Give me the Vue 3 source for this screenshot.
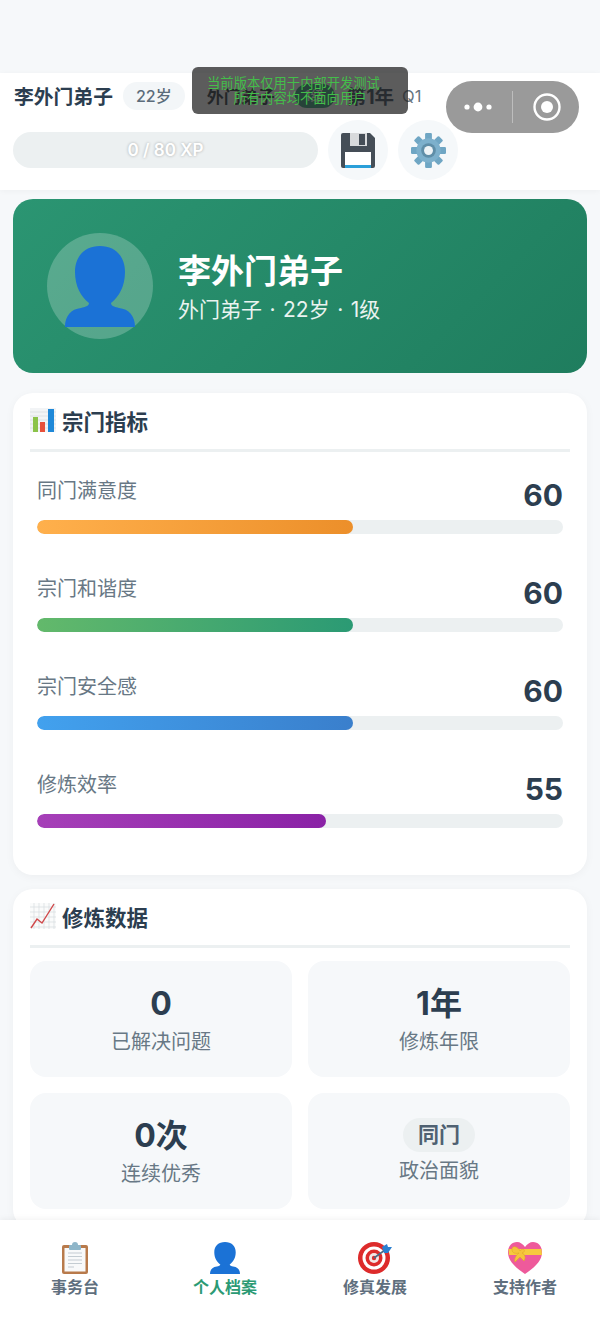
<template>
  <div class="page">
    <div class="status-space"></div>

    <header class="top">
      <div class="top-row">
        <span class="top-name">李外门弟子</span>
        <span class="age-pill">22岁</span>
        <span class="rank-text">外门弟子</span>
        <span class="rank-blob">1级</span>
        <span class="year">第1年</span>
        <span class="quarter">Q1</span>
      </div>
      <div class="top-row second">
        <div class="xp-bar">0 / 80 XP</div>
        <button class="round-btn">
          <svg width="34" height="35" viewBox="0 0 34 35">
            <path d="M2 0h27l5 5v28a2 2 0 0 1-2 2H2a2 2 0 0 1-2-2V2a2 2 0 0 1 2-2z" fill="#454e57" />
            <rect x="9" y="0" width="17" height="13" fill="#d8dadc" />
            <rect x="18" y="1" width="6" height="11" fill="#454e57" />
            <rect x="4" y="19" width="26" height="16" fill="#fff" />
            <rect x="4" y="32" width="26" height="3" fill="#2b9fd9" />
          </svg>
        </button>
        <button class="round-btn">
          <svg width="35" height="35" viewBox="0 0 36 36">
            <g fill="#6fa6c4">
              <rect x="14.5" y="0" width="7" height="36" rx="1.2" />
              <rect x="14.5" y="0" width="7" height="36" rx="1.2" transform="rotate(45 18 18)" />
              <rect x="14.5" y="0" width="7" height="36" rx="1.2" transform="rotate(90 18 18)" />
              <rect x="14.5" y="0" width="7" height="36" rx="1.2" transform="rotate(135 18 18)" />
            </g>
            <circle cx="18" cy="18" r="12.5" fill="#7db0cc" />
            <circle cx="18" cy="18" r="7.5" fill="#5f8ea8" />
            <circle cx="18" cy="18" r="4.6" fill="#eef3f6" />
          </svg>
        </button>
      </div>
    </header>

    <main class="content">
      <section class="hero">
        <div class="avatar">
          <svg width="70" height="81" viewBox="0 0 70 81">
            <path fill="#1b72d6" d="M35 0C50 0 60 10 60 26C60 40 54 51 46 57C46 60 50 61 54 62C64 63 70 70 70 81H0C0 70 6 63 16 62C20 61 24 60 24 57C16 51 10 40 10 26C10 10 20 0 35 0z" />
          </svg>
        </div>
        <div>
          <div class="hero-name">李外门弟子</div>
          <div class="hero-sub">外门弟子 · 22岁 · 1级</div>
        </div>
      </section>

      <section class="card metrics">
        <h2 class="card-title">
          <svg width="26" height="24" viewBox="0 0 26 24">
            <rect width="26" height="24" fill="#f2f4f6" />
            <path d="M0 4h26M0 8h26M0 12h26M0 16h26M0 20h26" stroke="#d9dee2" stroke-width="0.8" />
            <rect x="3" y="9" width="5" height="15" fill="#8bc34a" />
            <rect x="10" y="14" width="5" height="10" fill="#e8503a" />
            <rect x="18" y="1" width="6" height="23" fill="#1e88d8" />
          </svg>
          宗门指标
        </h2>
        <div v-for="m in metrics" :key="m.label" class="metric">
          <div class="metric-head">
            <span class="metric-label">{{ m.label }}</span>
            <span class="metric-value">{{ m.value }}</span>
          </div>
          <div class="track">
            <div class="fill" :style="{ width: m.value + '%', background: m.color }"></div>
          </div>
        </div>
      </section>

      <section class="card">
        <h2 class="card-title">
          <svg width="26" height="26" viewBox="0 0 26 26">
            <rect width="26" height="26" fill="#fafbfb" />
            <path d="M0 4h26M0 9h26M0 14h26M0 19h26M0 24h26M4 0v26M9 0v26M14 0v26M19 0v26M24 0v26" stroke="#d6dcdf" stroke-width="0.7" />
            <path d="M1 25L7 16l5 4L24 1" fill="none" stroke="#d0484a" stroke-width="1.4" />
          </svg>
          修炼数据
        </h2>
        <div class="stats">
          <div v-for="s in stats" :key="s.label" class="stat">
            <span v-if="s.pill" class="stat-pill">{{ s.value }}</span>
            <span v-else class="stat-value">{{ s.value }}</span>
            <span class="stat-label">{{ s.label }}</span>
          </div>
        </div>
      </section>
    </main>

    <nav class="tabbar">
      <div class="tab">
        <svg width="28" height="32" viewBox="0 0 28 32">
          <rect x="1" y="3" width="26" height="29" rx="2" fill="#b87a4b" />
          <rect x="3.5" y="6" width="21" height="23.5" fill="#f8f9fa" />
          <path d="M7 11h14M7 14.5h14M7 18h14M7 21.5h14M7 25h6" stroke="#c4ccd2" stroke-width="1.1" />
          <rect x="8" y="3" width="12" height="5" rx="1" fill="#8fb6c9" />
          <circle cx="14" cy="3" r="3" fill="#8fb6c9" />
        </svg>
        <span>事务台</span>
      </div>
      <div class="tab active">
        <svg width="30" height="32" viewBox="0 0 70 81" preserveAspectRatio="none">
          <path fill="#1b72d6" d="M35 0C50 0 60 10 60 26C60 40 54 51 46 57C46 60 50 61 54 62C64 63 70 70 70 81H0C0 70 6 63 16 62C20 61 24 60 24 57C16 51 10 40 10 26C10 10 20 0 35 0z" />
        </svg>
        <span>个人档案</span>
      </div>
      <div class="tab">
        <svg width="34" height="32" viewBox="0 0 34 32">
          <circle cx="16" cy="16" r="16" fill="#dd2b2b" />
          <circle cx="16" cy="16" r="11.5" fill="#fff" />
          <circle cx="16" cy="16" r="8.5" fill="#dd2b2b" />
          <circle cx="16" cy="16" r="5" fill="#f3e6e4" />
          <circle cx="16" cy="16" r="2.2" fill="#dd2b2b" />
          <path d="M16 16L27 8" stroke="#4a6a85" stroke-width="1.6" />
          <path d="M24 5l5-3 1 3 4 0-4 6-4 0z" fill="#2a7fd0" />
        </svg>
        <span>修真发展</span>
      </div>
      <div class="tab">
        <svg width="34" height="32" viewBox="0 0 34 32">
          <path fill="#ee5a9b" d="M17 32C7 25 0 19 0 10 0 4 4 0 9 0c3 0 6 2 8 5 2-3 5-5 8-5 5 0 9 4 9 10 0 9-7 15-17 22z" />
          <path fill="#f7c93e" d="M.5 7h33l.5 6H1z" />
          <path fill="#f5c23a" stroke="#e0a52a" stroke-width="0.6" d="M12 9C9 3 3 4 4 8c0 3 4 4 7 3-3 2-5 6-4 9l5-5 4 4c2-3 1-7-2-8 3-1 3-3 1-4-1 0-2 1-3 2z" />
        </svg>
        <span>支持作者</span>
      </div>
    </nav>

    <div class="dev-toast">
      <p>当前版本仅用于内部开发测试</p>
      <p>所有内容均不面向用户</p>
    </div>

    <div class="capsule">
      <svg width="30" height="12" viewBox="0 0 30 12">
        <circle cx="4" cy="6" r="2.6" fill="#fff" />
        <circle cx="15" cy="6" r="4.4" fill="#fff" />
        <circle cx="26" cy="6" r="2.6" fill="#fff" />
      </svg>
      <span class="capsule-line"></span>
      <svg width="30" height="30" viewBox="0 0 30 30">
        <circle cx="15" cy="15" r="12.5" fill="none" stroke="#fff" stroke-width="2.4" />
        <circle cx="15" cy="15" r="6" fill="#fff" />
      </svg>
    </div>
  </div>
</template>

<script setup>
const metrics = [
  { label: '同门满意度', value: 60, color: 'linear-gradient(90deg, #ffb04c, #ec8f2a)' },
  { label: '宗门和谐度', value: 60, color: 'linear-gradient(90deg, #63b96b, #2b9a74)' },
  { label: '宗门安全感', value: 60, color: 'linear-gradient(90deg, #42a1ee, #3a7fcc)' },
  { label: '修炼效率', value: 55, color: 'linear-gradient(90deg, #a63fb8, #8a22a6)' }
]

const stats = [
  { value: '0', label: '已解决问题' },
  { value: '1年', label: '修炼年限' },
  { value: '0次', label: '连续优秀' },
  { value: '同门', label: '政治面貌', pill: true }
]
</script>

<style scoped>
.page {
  position: relative;
  width: 600px;
  height: 1320px;
  overflow: hidden;
  background: #f6f8fa;
  font-family: Inter, "Noto Sans CJK SC", sans-serif;
  color: #2c3e50;
}

.status-space {
  height: 73px;
}

.top {
  height: 117px;
  padding: 0 13px;
  background: #fff;
  box-sizing: border-box;
  box-shadow: 0 1px 6px rgba(0, 0, 0, 0.04);
}

.top-row {
  display: flex;
  align-items: center;
  height: 45px;
}

.top-row.second {
  height: 60px;
  margin-top: 2px;
  gap: 10px;
}

.top-name {
  margin-left: 1px;
  font-size: 19.8px;
  font-weight: 700;
}

.age-pill {
  margin-left: 10px;
  padding: 0 13px;
  height: 28px;
  line-height: 28px;
  border-radius: 14px;
  background: #f3f6f8;
  font-size: 16px;
  font-weight: 500;
  color: #5c6c7b;
}

.rank-text {
  margin-left: 22px;
  font-size: 17px;
  font-weight: 600;
  color: #1e2b33;
}

.rank-blob {
  width: 40px;
  height: 24px;
  margin-left: 20px;
  border-radius: 12px;
  background: #2b9a74;
  color: #fff;
  font-size: 14px;
  line-height: 24px;
  text-align: center;
}

.year {
  margin-left: 12px;
  font-size: 19.5px;
  font-weight: 700;
}

.quarter {
  margin-left: 8px;
  font-size: 16.5px;
  color: #66757f;
}

.xp-bar {
  width: 305px;
  height: 36px;
  line-height: 36px;
  border-radius: 18px;
  background: #ecf0f1;
  text-align: center;
  font-size: 17px;
  font-weight: 600;
  color: #fff;
  text-shadow: 0 0 3px rgba(0, 0, 0, 0.3);
}

.round-btn {
  display: flex;
  align-items: center;
  justify-content: center;
  width: 60px;
  height: 60px;
  padding: 0;
  border: 0;
  border-radius: 50%;
  background: #f5f8fa;
}

.content {
  padding: 9px 13px 0;
}

.hero {
  display: flex;
  align-items: center;
  gap: 25px;
  height: 174px;
  padding-left: 34px;
  box-sizing: border-box;
  border-radius: 20px;
  background: linear-gradient(135deg, #2b9572, #1f7d5e);
  color: #fff;
}

.avatar {
  display: flex;
  align-items: center;
  justify-content: center;
  width: 106px;
  height: 106px;
  border-radius: 50%;
  background: rgba(255, 255, 255, 0.22);
}

.hero-name {
  font-size: 33px;
  line-height: 44px;
  font-weight: 700;
}

.hero-sub {
  margin-top: 3px;
  font-size: 21px;
  line-height: 28px;
  word-spacing: 1.6px;
  opacity: 0.9;
}

.card {
  margin-top: 20px;
  padding: 12px 17px 0;
  border-radius: 20px;
  background: #fff;
  box-shadow: 0 2px 10px rgba(0, 0, 0, 0.04);
}

.metrics {
  height: 482px;
  box-sizing: border-box;
}

.metrics + .card {
  margin-top: 14px;
  height: 340px;
  box-sizing: border-box;
}

.card-title {
  display: flex;
  align-items: center;
  gap: 6px;
  height: 30px;
  margin: 0;
  padding-bottom: 14px;
  border-bottom: 3px solid #ecf0f1;
  font-size: 21.5px;
  font-weight: 700;
}

.metric {
  margin: 0 7px;
  height: 98px;
  box-sizing: border-box;
  padding-top: 24px;
}

.metric-head {
  display: flex;
  align-items: center;
  justify-content: space-between;
  height: 36px;
}

.metric-label {
  margin-top: -10px;
  font-size: 20px;
  color: #687885;
}

.metric-value {
  margin-top: 2px;
  font-size: 30px;
  font-weight: 700;
}

.track {
  height: 14px;
  margin-top: 8px;
  border-radius: 7px;
  background: #ecf0f1;
  overflow: hidden;
}

.fill {
  height: 100%;
  border-radius: 7px;
}

.stats {
  display: grid;
  grid-template-columns: 262px 262px;
  gap: 16px;
  margin-top: 13px;
}

.stat {
  display: flex;
  flex-direction: column;
  align-items: center;
  justify-content: center;
  gap: 2px;
  height: 116px;
  box-sizing: border-box;
  border-radius: 16px;
  background: #f6f8fa;
}

.stat-value {
  font-size: 32px;
  line-height: 44px;
  font-weight: 700;
}

.stat-pill {
  height: 34px;
  margin-bottom: 3px;
  padding: 0 15px;
  line-height: 34px;
  border-radius: 17px;
  background: #ecf0f1;
  font-size: 21px;
  font-weight: 700;
  color: #4f6172;
}

.stat-label {
  font-size: 20px;
  line-height: 28px;
  color: #687885;
}

.tabbar {
  position: absolute;
  left: 0;
  right: 0;
  bottom: 0;
  display: grid;
  grid-template-columns: repeat(4, 150px);
  height: 100px;
  background: #fff;
  box-shadow: 0 -1px 6px rgba(0, 0, 0, 0.06);
}

.tab {
  display: flex;
  flex-direction: column;
  align-items: center;
  padding-top: 22px;
  font-size: 16px;
  font-weight: 700;
  color: #5f6f7e;
}

.tab span {
  margin-top: 1px;
  line-height: 24px;
}

.tab.active {
  color: #2b9a74;
}

.dev-toast {
  position: absolute;
  left: 192px;
  top: 67px;
  width: 216px;
  height: 47px;
  padding-top: 9px;
  box-sizing: border-box;
  border-radius: 6px;
  background: rgba(37, 37, 37, 0.75);
  color: #44bd4a;
  font-size: 13.3px;
  line-height: 15px;
  text-align: center;
}

.dev-toast p {
  margin: 0;
}

.dev-toast p:first-child {
  margin-right: 13px;
}

.capsule {
  position: absolute;
  left: 446px;
  top: 81px;
  display: flex;
  align-items: center;
  justify-content: space-between;
  width: 133px;
  height: 52px;
  padding: 0 17px;
  box-sizing: border-box;
  border-radius: 26px;
  background: #9a9a9a;
}

.capsule-line {
  width: 1px;
  height: 32px;
  background: rgba(255, 255, 255, 0.35);
}
</style>

<style>
html, body {
  margin: 0;
  padding: 0;
}
</style>
